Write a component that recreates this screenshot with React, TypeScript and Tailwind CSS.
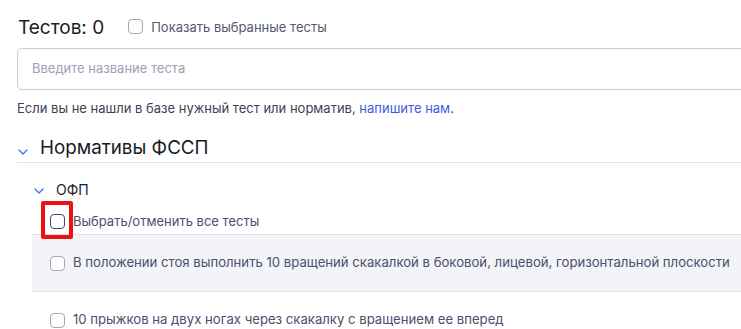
import React from "react";

const ITEMS = [
  "В положении стоя выполнить 10 вращений скакалкой в боковой, лицевой, горизонтальной плоскости",
  "10 прыжков на двух ногах через скакалку с вращением ее вперед",
];

function Box({ dark = false }: { dark?: boolean }) {
  return (
    <span
      className={`inline-block h-[15px] w-[15px] shrink-0 rounded-[4px] border-[1.5px] bg-white ${
        dark ? "border-[#3f4668]" : "border-[#a3a7b6]"
      }`}
    />
  );
}

function Chevron() {
  return (
    <svg width="10" height="6" viewBox="0 0 10 6" fill="none" className="shrink-0">
      <polyline points="1,1 5,5 9,1" stroke="#4f6df0" strokeWidth="1.4" strokeLinecap="round" strokeLinejoin="round" />
    </svg>
  );
}

export default function App() {
  return (
    <div className="h-[329px] w-[741px] overflow-hidden bg-white font-['Inter',sans-serif]">
      <div className="w-[760px] pl-[17px] pt-[15px]">
        <div className="flex h-[26px] items-center">
          <span className="ml-[1px] text-[19px] leading-[26px] text-[#1c1d28]">Тестов: 0</span>
          <span className="ml-[24px]">
            <Box />
          </span>
          <span className="ml-[8px] text-[13px] text-[#535a6e]">Показать выбранные тесты</span>
        </div>

        <div className="mt-[7px] flex h-[42px] items-center rounded-[5px] border border-[#c9cad6] pl-[14px]">
          <span className="text-[13px] text-[#9ca1b4]">Введите название теста</span>
        </div>

        <div className="mt-[9px] text-[13px] leading-[18px] text-[#3c4155]">
          Если вы не нашли в базе нужный тест или норматив,{" "}
          <span className="text-[#3d5ce6]">напишите нам</span>.
        </div>

        <div className="mt-[17px] flex h-[29px] items-start border-b border-[#e2e3ea]">
          <span className="ml-[1px] mt-[15px]">
            <Chevron />
          </span>
          <span className="ml-[12px] text-[18.8px] leading-[28px] text-[#1a1b26]">Нормативы ФССП</span>
        </div>

        <div className="ml-[15px]">
          <div className="mt-[17px] flex h-[20px] items-center">
            <span className="ml-[2px] mt-[2px]">
              <Chevron />
            </span>
            <span className="ml-[12px] text-[14px] leading-[20px] text-[#1c1d28]">ОФП</span>
          </div>

          <div className="relative mb-[5px] mt-[14px] flex h-[15px] items-center pl-[18px]">
            <Box dark />
            <span className="ml-[8px] text-[13px] leading-[15px] text-[#4a4f6e]">Выбрать/отменить все тесты</span>
            <span className="absolute left-[9px] top-[-13px] h-[38px] w-[32px] rounded-[2px] border-[4px] border-[#ee1111]" />
          </div>

          <div className="border-t border-[#e0e2ea]">
            {ITEMS.map((t, i) => (
              <div
                key={i}
                className={`flex h-[57px] items-center border-b border-[#e0e2ea] pl-[18px] ${
                  i === 0 ? "bg-[#f3f4f8]" : "bg-white"
                }`}
              >
                <Box />
                <span className="ml-[8px] text-[13.15px] text-[#4a4f6e]">{t}</span>
              </div>
            ))}
          </div>
        </div>
      </div>
    </div>
  );
}
